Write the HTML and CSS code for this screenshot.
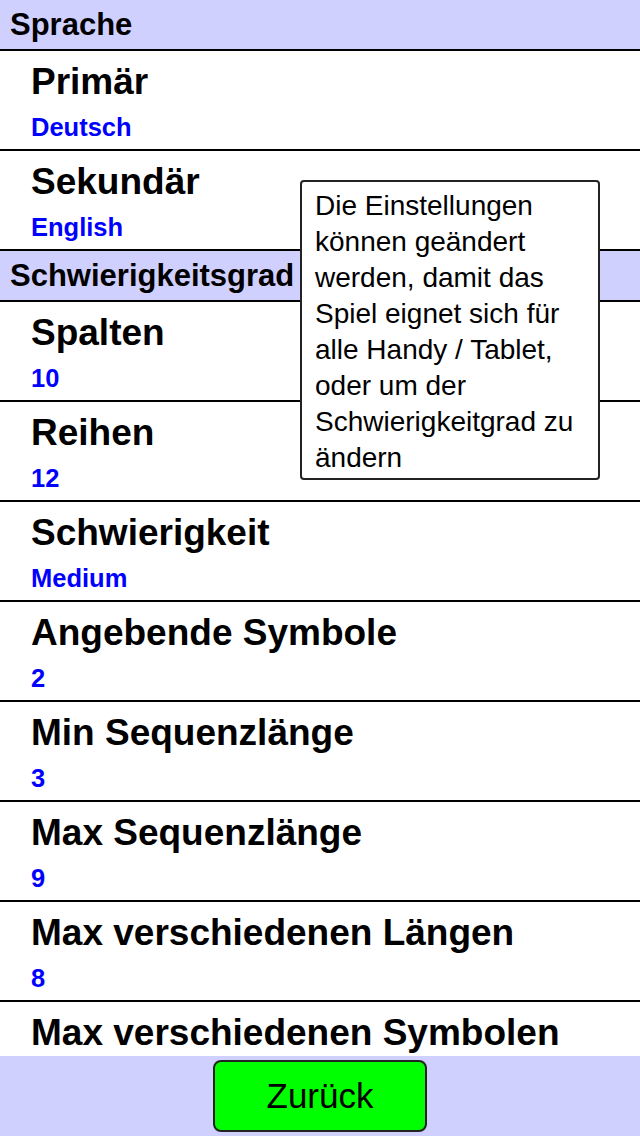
FILE: index.html
```html
<!doctype html>
<html>
  <head>
    <meta charset="utf-8">
    <meta name="viewport" content="width=device-width, initial-scale=1">
    <title>Einstellungen</title>
    <link rel="stylesheet" href="styles.css">
  </head>
  <body>
    <div id="screen">
      <section id="list">
        <div class="head">Sprache</div>
        <div class="pref">
          <div class="title">Primär</div>
          <div class="value">Deutsch</div>
        </div>
        <div class="pref">
          <div class="title">Sekundär</div>
          <div class="value">English</div>
        </div>

        <div class="head">Schwierigkeitsgrad</div>
        <div class="pref">
          <div class="title">Spalten</div>
          <div class="value">10</div>
        </div>
        <div class="pref">
          <div class="title">Reihen</div>
          <div class="value">12</div>
        </div>
        <div class="pref">
          <div class="title">Schwierigkeit</div>
          <div class="value">Medium</div>
        </div>
        <div class="pref">
          <div class="title">Angebende Symbole</div>
          <div class="value">2</div>
        </div>
        <div class="pref">
          <div class="title">Min Sequenzlänge</div>
          <div class="value">3</div>
        </div>
        <div class="pref">
          <div class="title">Max Sequenzlänge</div>
          <div class="value">9</div>
        </div>
        <div class="pref">
          <div class="title">Max verschiedenen Längen</div>
          <div class="value">8</div>
        </div>
        <div class="pref">
          <div class="title">Max verschiedenen Symbolen</div>
        </div>
      </section>

      <footer id="bar">
        <button id="back">Zurück</button>
      </footer>

      <div id="hint">
        Die Einstellungen können geändert werden, damit das Spiel eignet sich für alle Handy / Tablet, oder um der Schwierigkeitgrad zu ändern
      </div>
    </div>
  </body>
</html>
```

FILE: styles.css
```css
* {
  margin: 0;
  padding: 0;
  box-sizing: border-box;
}
html, body {
  height: 100%;
  overflow: hidden;
  font-family: "Liberation Sans", Arial, Helvetica, sans-serif;
  background: #fff;
  color: #000;
}
#screen {
  position: relative;
  height: 100%;
  display: flex;
  flex-direction: column;
}
#list {
  flex: 1;
  overflow: hidden;
}
.head {
  height: 51px;
  line-height: 49px;
  padding-left: 10px;
  font-size: 31px;
  font-weight: bold;
  background: #d0d0ff;
  border-bottom: 2px solid #000;
}
.pref {
  height: 100px;
  padding: 11px 0 0 31px;
  border-bottom: 2px solid #000;
}
.title {
  font-size: 37px;
  font-weight: bold;
  line-height: 40px;
  white-space: nowrap;
}
.value {
  margin-top: 10px;
  font-size: 25.5px;
  font-weight: bold;
  line-height: 30px;
  color: #00f;
}
#bar {
  height: 80px;
  flex: none;
  display: flex;
  align-items: center;
  justify-content: center;
  background: #d0d0ff;
}
#back {
  width: 214px;
  height: 72px;
  font-family: inherit;
  font-size: 35px;
  color: #000;
  background: #00ff00;
  border: 2px solid #222;
  border-radius: 8px;
}
#hint {
  position: absolute;
  left: 300px;
  top: 180px;
  width: 300px;
  height: 300px;
  padding: 6px 11px 0 13px;
  font-size: 28px;
  line-height: 36px;
  background: #fff;
  border: 2px solid #222;
  border-radius: 4px;
}
```
